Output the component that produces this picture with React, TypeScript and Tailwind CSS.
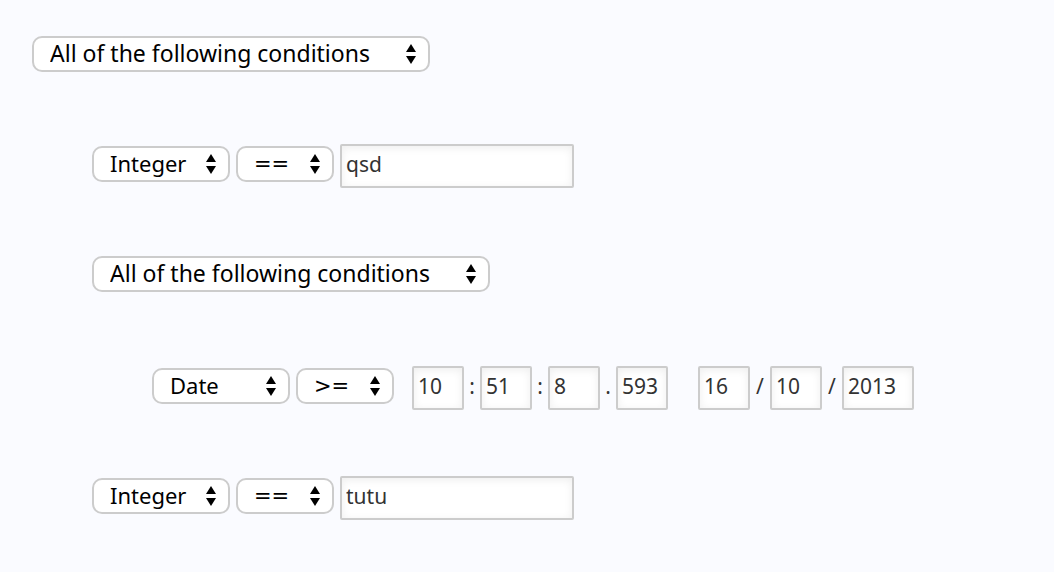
import { useState } from "react";
import type { ReactNode } from "react";
import clsx from "clsx";

type SelectProps = {
  label: string;
  initial: string;
  options: string[];
  className: string;
};

function Select({ label, initial, options, className }: SelectProps) {
  const [value, setValue] = useState(initial);
  return (
    <div className="relative mt-0.5 h-9 shrink-0">
      <select
        aria-label={label}
        value={value}
        onChange={(e) => setValue(e.target.value)}
        className={clsx(
          "block h-9 appearance-none rounded-[10px] border-2 border-[#cccccc] bg-white pl-4 pr-7 text-black",
          className,
        )}
      >
        {options.map((option) => (
          <option key={option}>{option}</option>
        ))}
      </select>
      <svg
        aria-hidden="true"
        viewBox="0 0 10 20"
        className="pointer-events-none absolute right-3.5 top-2 h-5 w-2.5"
      >
        <path d="M5 0L10 8H0ZM0 12H10L5 20Z" fill="#000" />
      </svg>
    </div>
  );
}

function TextField({ label, initial, className }: { label: string; initial: string; className: string }) {
  const [value, setValue] = useState(initial);
  return (
    <input
      type="text"
      aria-label={label}
      value={value}
      onChange={(e) => setValue(e.target.value)}
      className={clsx(
        "h-11 shrink-0 rounded-[2px] border-2 border-[#cccccc] bg-white px-1 pb-1 text-[21px] text-[#333333] shadow-[inset_0_2px_8px_rgba(0,0,0,0.07)]",
        className,
      )}
    />
  );
}

function Separator({ children, className }: { children: ReactNode; className: string }) {
  return (
    <span className={clsx("shrink-0 text-center text-[21px] leading-10 text-[#333333]", className)}>
      {children}
    </span>
  );
}

const matchModes = ["All of the following conditions", "Any of the following conditions"];
const valueTypes = ["Integer", "Date", "String"];
const operators = ["==", "!=", ">=", "<=", ">", "<"];

function MatchSelect() {
  return (
    <div className="flex h-11 items-start">
      <Select
        label="Match mode"
        initial={matchModes[0]}
        options={matchModes}
        className="w-[398px] pb-0.5 text-[23px] leading-[30px]"
      />
    </div>
  );
}

function Condition({ type, operator, children }: { type: string; operator: string; children: ReactNode }) {
  return (
    <div className="flex items-start gap-1.5">
      <Select
        label="Value type"
        initial={type}
        options={valueTypes}
        className="w-[138px] pb-0.5 text-[22px] leading-[30px]"
      />
      <Select
        label="Operator"
        initial={operator}
        options={operators}
        className="w-[98px] font-['DejaVu_Sans',sans-serif] text-[21px] leading-8"
      />
      {children}
    </div>
  );
}

export default function App() {
  return (
    <main className="min-h-screen bg-[#fafbff] px-8 pb-13 pt-[34px] font-['Noto_Sans',sans-serif]">
      <MatchSelect />
      <div className="mt-[66px] flex flex-col gap-[66px] pl-15">
        <Condition type="Integer" operator="==">
          <TextField label="Integer value" initial="qsd" className="w-[234px]" />
        </Condition>
        <section>
          <MatchSelect />
          <div className="mt-[68px] pl-15">
            <Condition type="Date" operator=">=">
              <div className="ml-3 flex items-start">
                <TextField label="Hours" initial="10" className="w-13" />
                <Separator className="w-4">:</Separator>
                <TextField label="Minutes" initial="51" className="w-13" />
                <Separator className="w-4">:</Separator>
                <TextField label="Seconds" initial="8" className="w-13" />
                <Separator className="w-4">.</Separator>
                <TextField label="Milliseconds" initial="593" className="w-13" />
              </div>
              <div className="ml-6 flex items-start">
                <TextField label="Day" initial="16" className="w-13" />
                <Separator className="w-5">/</Separator>
                <TextField label="Month" initial="10" className="w-13" />
                <Separator className="w-5">/</Separator>
                <TextField label="Year" initial="2013" className="w-18" />
              </div>
            </Condition>
          </div>
        </section>
        <Condition type="Integer" operator="==">
          <TextField label="Integer value" initial="tutu" className="w-[234px]" />
        </Condition>
      </div>
    </main>
  );
}
